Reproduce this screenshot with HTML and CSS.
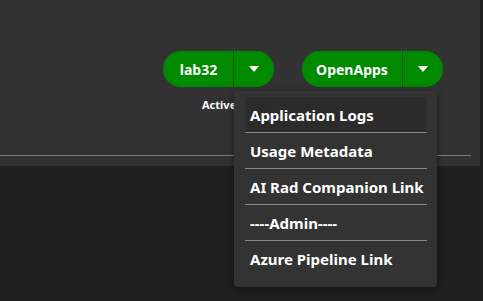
FILE: index.html
```html
<!DOCTYPE html>
<html>
<head>
<meta charset="utf-8">
<link rel="stylesheet" href="styles.css">
</head>
<body>
<div class="panel">
  <div class="toolbar">
    <div class="group">
      <div class="split">
        <span class="main main-lab">lab32</span>
        <span class="caret"><i class="tri"></i></span>
      </div>
      <div class="label">Active</div>
    </div>
    <div class="group">
      <div class="split">
        <span class="main main-open">OpenApps</span>
        <span class="caret"><i class="tri"></i></span>
      </div>
    </div>
  </div>
  <div class="rule"></div>
</div>
<div class="menu">
  <div class="item hover">Application Logs</div>
  <div class="sep"></div>
  <div class="item">Usage Metadata</div>
  <div class="sep"></div>
  <div class="item">AI Rad Companion Link</div>
  <div class="sep"></div>
  <div class="item">----Admin----</div>
  <div class="sep"></div>
  <div class="item">Azure Pipeline Link</div>
</div>
</body>
</html>
```

FILE: styles.css
```css
html, body {
  margin: 0;
  padding: 0;
}
body {
  background: #1f1f1f;
  width: 483px;
  height: 301px;
  overflow: hidden;
  font-family: "Noto Sans", "Open Sans", sans-serif;
  color: #fff;
  position: relative;
}
.panel {
  width: 480px;
  height: 166px;
  background: #323232;
  box-sizing: border-box;
  padding-top: 51px;
}
.toolbar {
  display: flex;
  justify-content: flex-end;
  gap: 28px;
  padding-right: 37px;
  height: 104px;
}
.group {
  display: flex;
  flex-direction: column;
  align-items: flex-start;
}
.split {
  display: flex;
  height: 36px;
  border-radius: 18px;
  overflow: hidden;
  background: #008a00;
}
.main {
  display: flex;
  align-items: center;
  justify-content: center;
  font-size: 14px;
  font-weight: 700;
  border-right: 1px solid #1d4d1d;
}
.main-lab { width: 69px; padding-left: 1px; }
.main-open { width: 100px; }
.caret {
  width: 40px;
  display: flex;
  align-items: center;
  justify-content: center;
}
.tri {
  width: 0;
  height: 0;
  border-left: 5px solid transparent;
  border-right: 5px solid transparent;
  border-top: 6px solid #fff;
  margin-right: 1px;
}
.label {
  width: 0;
  white-space: nowrap;
  margin-top: 10px;
  margin-left: 39px;
  font-size: 11px;
  font-weight: 700;
}
.rule {
  width: 471px;
  height: 1px;
  background: #7c7c7c;
}
.menu {
  position: absolute;
  left: 234px;
  top: 91px;
  width: 203px;
  height: 196px;
  box-sizing: border-box;
  padding: 6px 10px 0 11px;
  background: #333333;
  border-radius: 4px;
  box-shadow: 0 2px 8px rgba(0,0,0,0.45);
}
.item {
  height: 35px;
  display: flex;
  align-items: center;
  padding-left: 5px;
  font-size: 15px;
  font-weight: 700;
  white-space: nowrap;
}
.item.hover {
  background: #2b2b2b;
}
.sep {
  height: 1px;
  background: #8a8a8a;
}
```
